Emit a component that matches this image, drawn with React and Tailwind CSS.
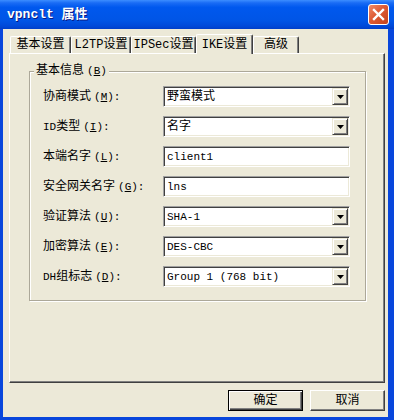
import React from "react";

const tabs = [
  { label: "基本设置", w: "w-[61px]" },
  { label: "L2TP设置", w: "w-[60px]" },
  { label: "IPSec设置", w: "w-[65px]" },
  { label: "IKE设置", w: "w-[57px]", active: true },
  { label: "高级", w: "w-[46px]" },
];

const fields = [
  { pre: "", zh: "协商模式", hot: "M", value: "野蛮模式", combo: true },
  { pre: "ID", zh: "类型", hot: "I", value: "名字", combo: true },
  { pre: "", zh: "本端名字", hot: "L", value: "client1" },
  { pre: "", zh: "安全网关名字", hot: "G", value: "lns" },
  { pre: "", zh: "验证算法", hot: "U", value: "SHA-1", combo: true },
  { pre: "", zh: "加密算法", hot: "E", value: "DES-CBC", combo: true },
  { pre: "DH", zh: "组标志", hot: "D", value: "Group 1 (768 bit)", combo: true },
];

const isLatin = (s) => /^[\x00-\x7f]+$/.test(s);

const Hotkey = ({ k, colon = true }) => (
  <span className="text-[11px] ml-[3px]">
    (<u>{k}</u>){colon ? ":" : ""}
  </span>
);

const DropButton = () => (
  <div className="w-[16px] h-[17px] mr-[1px] flex items-center justify-center bg-[#ece9d8] border border-t-[#ece9d8] border-l-[#ece9d8] border-r-[#404040] border-b-[#404040] shadow-[inset_1px_1px_0_white,inset_-1px_-1px_0_#808080]">
    <svg width="7" height="4" viewBox="0 0 7 4">
      <polygon points="0,0 7,0 3.5,4" fill="black" />
    </svg>
  </div>
);

const Field = ({ value, combo }) => (
  <div className="w-[187px] h-[21px] flex items-center bg-white border border-t-[#a0a0a0] border-l-[#a0a0a0] border-r-white border-b-white shadow-[inset_1px_1px_0_#404040,inset_-1px_-1px_0_#ece9d8]">
    <span className={`flex-1 pl-[3px] ${isLatin(value) ? "text-[11px]" : "text-[12px]"}`}>
      {value}
    </span>
    {combo && <DropButton />}
  </div>
);

const TitleBar = () => (
  <div className="h-[29px] flex items-center bg-[linear-gradient(to_bottom,#3c8dff_0%,#1a6cf5_10%,#0058ee_25%,#0055e6_70%,#0049d9_90%,#003ec9_100%)]">
    <span className="ml-[7px] text-white font-bold text-[13px] [text-shadow:1px_1px_0_#0a1883]">
      vpnclt 属性
    </span>
    <div className="ml-auto mr-[5px] w-[21px] h-[21px] rounded-[3px] border border-white bg-[linear-gradient(135deg,#f08b6a_0%,#dd5a34_45%,#c3421c_100%)] flex items-center justify-center">
      <svg width="13" height="13" viewBox="0 0 13 13">
        <path d="M2 2 L11 11 M11 2 L2 11" stroke="white" strokeWidth="2.4" strokeLinecap="square" />
      </svg>
    </div>
  </div>
);

export default function App() {
  return (
    <div className="w-[394px] h-[420px] flex flex-col bg-[#0846dc] font-['Liberation_Mono','Noto_Sans_CJK_SC',monospace] text-[12px] leading-[14px] text-black">
      <TitleBar />
      <div className="flex-1 flex flex-col ml-[3px] mr-[6px] mb-[3px] bg-[#ece9d8] pl-[6px] pr-[3px] pt-[5px]">
        {/* tabs */}
        <div className="h-[19px] flex items-end pl-[1px] relative z-10">
          {tabs.map((t) =>
            t.active ? (
              <div
                key={t.label}
                className={`${t.w} h-[20px] -mb-[1px] flex items-center justify-center bg-[#ece9d8] border-t border-l border-r border-t-white border-l-white border-r-[#404040] shadow-[inset_-1px_0_0_#808080] rounded-t-[2px]`}
              >
                {t.label}
              </div>
            ) : (
              <div
                key={t.label}
                className={`${t.w} h-[17px] flex items-center justify-center border-t border-l border-r border-t-white border-l-white border-r-[#404040] shadow-[inset_-1px_0_0_#808080] rounded-t-[2px]`}
              >
                {t.label}
              </div>
            )
          )}
        </div>

        {/* tab page */}
        <div className="h-[330px] border border-t-white border-l-white border-r-[#404040] border-b-[#404040] shadow-[inset_-1px_-1px_0_#808080]">
          <div className="relative w-[337px] h-[230px] ml-[19px] mt-[17px] border border-[#aca899] shadow-[inset_1px_1px_0_white,1px_1px_0_white] pt-[14px] pl-[13px]">
            <span className="absolute -top-[8px] left-[4px] px-[2px] bg-[#ece9d8]">
              基本信息<Hotkey k="B" colon={false} />
            </span>
            <div className="flex flex-col gap-[9px]">
              {fields.map((f) => (
                <div key={f.zh} className="flex items-center h-[21px]">
                  <div className="w-[120px]">
                    {f.pre && <span className="text-[11px]">{f.pre}</span>}
                    {f.zh}
                    <Hotkey k={f.hot} />
                  </div>
                  <Field value={f.value} combo={f.combo} />
                </div>
              ))}
            </div>
          </div>
        </div>

        {/* buttons */}
        <div className="mt-[7px] flex justify-end gap-[7px]">
          <button className="w-[75px] h-[21px] border border-black bg-[#ece9d8] shadow-[inset_1px_1px_0_white,inset_-1px_-1px_0_#404040,inset_-2px_-2px_0_#808080]">
            确定
          </button>
          <button className="w-[75px] h-[21px] bg-[#ece9d8] border border-t-white border-l-white border-r-[#404040] border-b-[#404040] shadow-[inset_-1px_-1px_0_#808080]">
            取消
          </button>
        </div>
      </div>
    </div>
  );
}
